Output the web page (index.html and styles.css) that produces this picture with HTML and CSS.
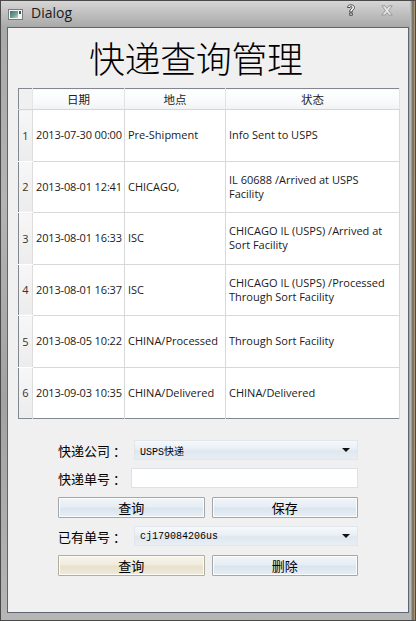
FILE: index.html
```html
<!DOCTYPE html>
<html lang="zh-CN">
<head>
<meta charset="utf-8">
<title>Dialog</title>
<link rel="stylesheet" href="styles.css">
</head>
<body>
<div class="window">
  <div class="titlebar">
    <svg class="app-icon" width="15" height="11" viewBox="0 0 15 11">
      <defs>
        <linearGradient id="ig" x1="0" y1="0" x2="1" y2="1">
          <stop offset="0" stop-color="#3f6f6c"/>
          <stop offset="0.6" stop-color="#6fa59c"/>
          <stop offset="1" stop-color="#c9d7d6"/>
        </linearGradient>
      </defs>
      <rect x="0.5" y="0.5" width="14" height="10" fill="#f4f4f4" stroke="#7a7a7a"/>
      <rect x="2" y="2" width="8" height="7" fill="url(#ig)"/>
      <rect x="11" y="2" width="2" height="3" fill="#3a5b66"/>
    </svg>
    <span class="caption">Dialog</span>
    <span class="spacer"></span>
    <svg class="help" width="10" height="12" viewBox="0 0 10 12">
      <path d="M1.5 3.5 C1.5 1.2 3.2 0.8 5 0.8 C7 0.8 8.5 1.8 8.5 3.6 C8.5 5.4 6.3 5.8 6.3 7.4 L6.3 8 L3.7 8 L3.7 7.2 C3.7 5.2 6 4.8 6 3.6 C6 2.8 5.5 2.5 5 2.5 C4.3 2.5 4 2.9 4 3.5 Z M3.7 9 L6.3 9 L6.3 11.3 L3.7 11.3 Z" fill="#f4f4f4" stroke="#3c3c3c" stroke-width="0.9" stroke-linejoin="round"/>
    </svg>
    <svg class="close" width="12" height="11" viewBox="0 0 12 11">
      <path d="M0.8 0.8 L4 0.8 L6 3.4 L8 0.8 L11.2 0.8 L7.6 5.5 L11.2 10.2 L8 10.2 L6 7.6 L4 10.2 L0.8 10.2 L4.4 5.5 Z" fill="#e6e6e6" stroke="#8c8c8c" stroke-width="0.8" stroke-linejoin="round"/>
    </svg>
  </div>
  <div class="frame">
    <div class="client">
      <h1 class="title">快递查询管理</h1>
      <table class="grid">
        <colgroup>
          <col class="c-num"><col class="c-date"><col class="c-place"><col class="c-state">
        </colgroup>
        <thead>
          <tr><th class="corner"></th><th>日期</th><th>地点</th><th>状态</th></tr>
        </thead>
        <tbody>
          <tr><th>1</th><td>2013-07-30 00:00</td><td>Pre-Shipment</td><td>Info Sent to USPS</td></tr>
          <tr><th>2</th><td>2013-08-01 12:41</td><td>CHICAGO,</td><td>IL 60688 /Arrived at USPS Facility</td></tr>
          <tr><th>3</th><td>2013-08-01 16:33</td><td>ISC</td><td>CHICAGO IL (USPS) /Arrived at Sort Facility</td></tr>
          <tr><th>4</th><td>2013-08-01 16:37</td><td>ISC</td><td>CHICAGO IL (USPS) /Processed Through Sort Facility</td></tr>
          <tr><th>5</th><td>2013-08-05 10:22</td><td>CHINA/Processed</td><td>Through Sort Facility</td></tr>
          <tr><th>6</th><td>2013-09-03 10:35</td><td>CHINA/Delivered</td><td>CHINA/Delivered</td></tr>
        </tbody>
      </table>
      <div class="form">
        <div class="row">
          <span class="label">快递公司 ：</span>
          <div class="combo"><span class="combo-text">USPS快递</span><span class="arrow"></span></div>
        </div>
        <div class="row">
          <span class="label">快递单号 ：</span>
          <div class="edit"></div>
        </div>
        <div class="buttons">
          <button class="btn">查询</button>
          <button class="btn">保存</button>
        </div>
        <div class="row">
          <span class="label">已有单号 ：</span>
          <div class="combo"><span class="combo-text">cj179084206us</span><span class="arrow"></span></div>
        </div>
        <div class="buttons">
          <button class="btn hot">查询</button>
          <button class="btn">删除</button>
        </div>
      </div>
    </div>
  </div>
</div>
</body>
</html>
```
FILE: styles.css
```css
html, body {
  margin: 0;
  padding: 0;
  background: #9a9a9a;
}

.window {
  width: 416px;
  height: 621px;
  box-sizing: border-box;
  border: 1px solid #4a4a4a;
  background:
    linear-gradient(90deg, rgba(0,0,0,0) 0, rgba(0,0,0,0) 409px, #c9c9c9 409px, #8d8d8d 411px, #6b5d48 412px, #a08a62 413px, #b9b9b9 415px),
    linear-gradient(180deg, #d6d6d6 0, #bdbdbd 14px, #a9a9a9 26px, #b4b4b4 200px, #a2a2a2 400px, #b6b6b6 621px);
  display: flex;
  flex-direction: column;
  font-family: "Open Sans", "Noto Sans CJK SC", sans-serif;
  overflow: hidden;
}

.titlebar {
  height: 26px;
  display: flex;
  align-items: center;
  padding: 0 22px 0 7px;
}

.app-icon {
  margin-top: 1px;
}

.caption {
  margin-left: 8px;
  font-family: "Open Sans", sans-serif;
  font-size: 14px;
  color: #1b1b1b;
  line-height: 16px;
  margin-top: -2px;
}

.spacer {
  flex: 1;
}

.help {
  margin-top: -8px;
  margin-right: 25px;
}

.close {
  margin-top: -8px;
}

.frame {
  flex: 1;
  padding: 0 6px 7px 6px;
  display: flex;
}

.client {
  width: 402px;
  box-sizing: border-box;
  border: 1px solid #5c6570;
  background: #f0f0f0;
  padding: 0 9px 0 10px;
}

.title {
  margin: 0;
  height: 60px;
  padding-left: 71px;
  font-family: "Noto Sans CJK SC", sans-serif;
  font-weight: 300;
  font-size: 36px;
  line-height: 58px;
  letter-spacing: -0.4px;
  color: #000;
}

.grid {
  width: 382px;
  border-collapse: collapse;
  border: 1px solid #828790;
  background: #fff;
  table-layout: fixed;
  font-family: "Open Sans", "Noto Sans CJK SC", sans-serif;
  font-size: 11px;
  color: #1a1a1a;
}

.c-num { width: 14px; }
.c-date { width: 92px; }
.c-place { width: 101px; }

.grid thead th {
  height: 21px;
  box-sizing: border-box;
  padding: 0;
  font-family: "Noto Sans CJK SC", sans-serif;
  font-weight: 400;
  font-size: 11.5px;
  color: #222;
  background: linear-gradient(180deg, #ffffff 0, #f9fafb 60%, #f1f2f4 100%);
  border-bottom: 1px solid #d5d5d5;
  border-right: 1px solid #e2e3e5;
}

.grid thead th.corner {
  background: #f0f0f0;
  border-right: 1px solid #e6e6e6;
}

.grid tbody th {
  padding: 0;
  font-weight: 400;
  background: linear-gradient(180deg, #f7f7f7 0, #ececec 100%);
  border-bottom: 1px solid #ffffff;
  border-right: 1px solid #dcdcdc;
  color: #333;
  text-align: center;
}

.grid td {
  height: 51.5px;
  box-sizing: border-box;
  padding: 0 3px;
  border-right: 1px solid #d8d8d8;
  border-bottom: 1px solid #d8d8d8;
  line-height: 14px;
  vertical-align: middle;
  overflow: hidden;
  white-space: normal;
}

.grid td:first-of-type {
  white-space: nowrap;
  padding-left: 3px;
  padding-right: 0;
  letter-spacing: -0.15px;
}

.grid tbody tr:last-child td,
.grid tbody tr:last-child th {
  border-bottom: none;
}

.form {
  margin-top: 21px;
  margin-left: 40px;
  width: 300px;
  display: flex;
  flex-direction: column;
  gap: 8px;
}

.row {
  display: flex;
  align-items: center;
  height: 20px;
}

.label {
  width: 73px;
  font-family: "Noto Sans CJK SC", sans-serif;
  font-size: 13px;
  color: #000;
  white-space: nowrap;
}

.combo {
  margin-left: 3px;
  flex: 1;
  height: 20px;
  box-sizing: border-box;
  border: 1px solid #e1e6eb;
  background: linear-gradient(180deg, #f6f9fb 0, #e9eff5 45%, #dfe7ef 55%, #e8eef4 100%);
  display: flex;
  align-items: center;
  padding: 0 5px 0 5px;
}

.combo-text {
  flex: 1;
  font-family: "Liberation Mono", "Noto Sans CJK SC", monospace;
  font-size: 10px;
  color: #000;
}

.arrow {
  width: 0;
  height: 0;
  border-left: 4px solid transparent;
  border-right: 4px solid transparent;
  border-top: 4px solid #111;
  margin-right: 2px;
}

.edit {
  flex: 1;
  height: 20px;
  box-sizing: border-box;
  border: 1px solid #dde2e8;
  background: #fff;
}

.buttons {
  display: flex;
  gap: 7px;
  margin-top: 1px;
}

.btn {
  flex: 1;
  height: 21px;
  box-sizing: border-box;
  padding: 0;
  border: 1px solid #a3a6aa;
  border-radius: 1px;
  background: linear-gradient(180deg, #f1f5f9 0, #e6edf4 45%, #dbe5ee 55%, #e7eef5 100%);
  box-shadow: inset 0 0 0 1px #fbfcfd;
  font-family: "Noto Sans CJK SC", sans-serif;
  font-size: 13px;
  line-height: 17px;
  color: #000;
}

.btn.hot {
  border-color: #b2ad9e;
  background: linear-gradient(180deg, #f7f4ea 0, #f0ebdc 45%, #e8e1cc 55%, #efeadb 100%);
  box-shadow: inset 0 0 0 1px #fcfbf6;
}
```
